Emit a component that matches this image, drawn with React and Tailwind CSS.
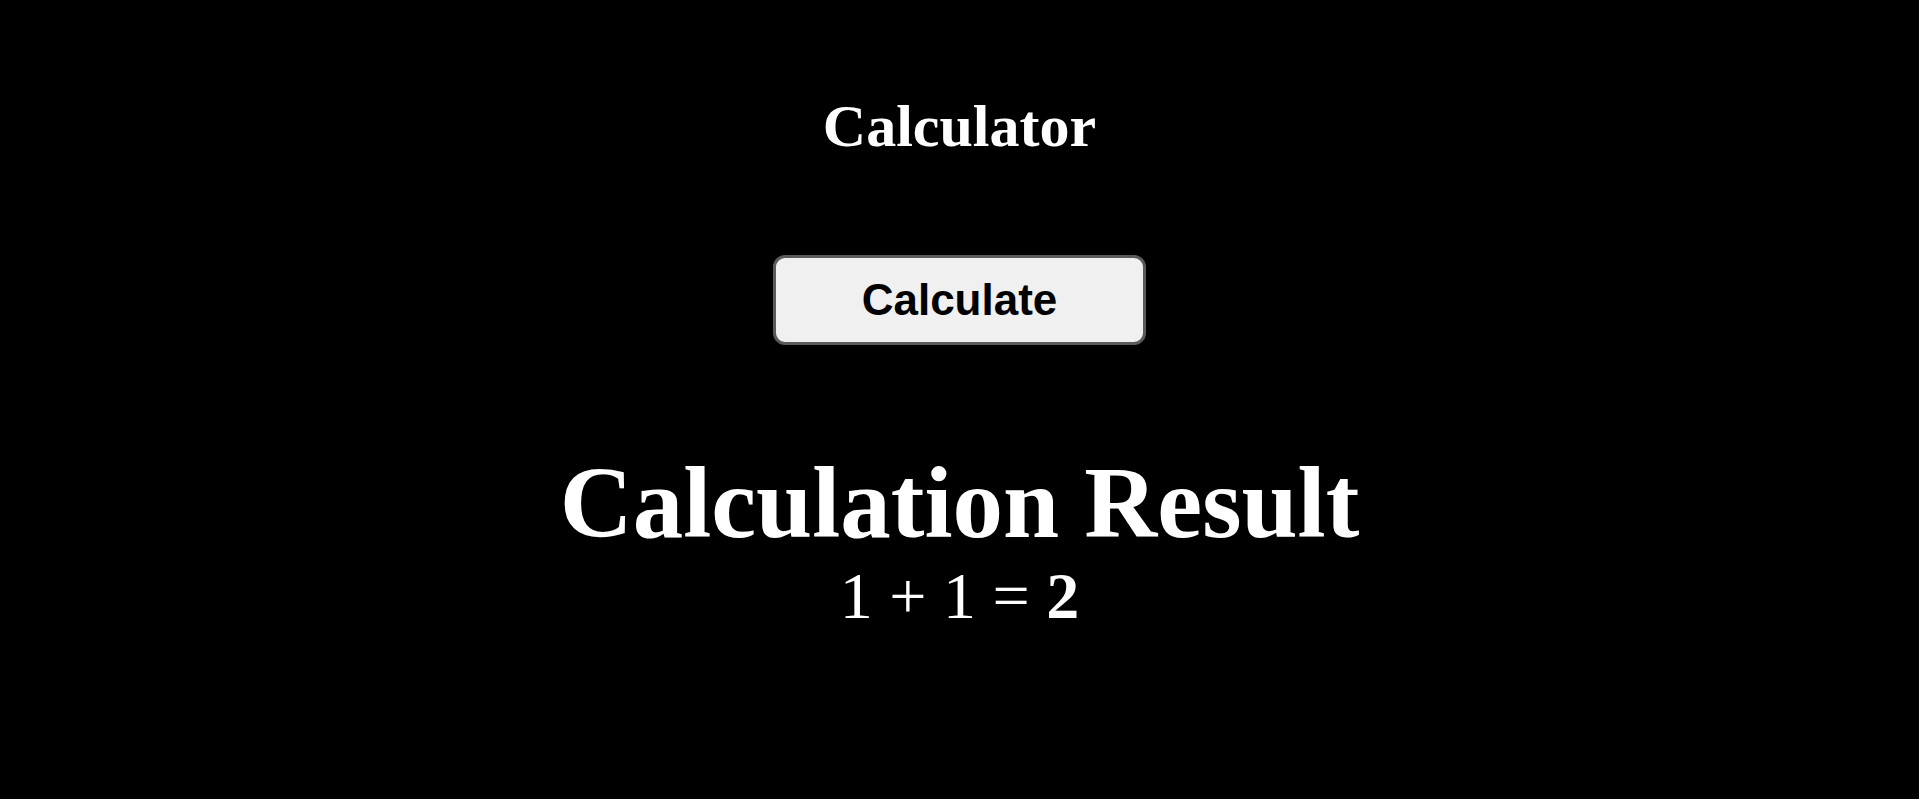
export default function App() {
  return (
    <div className="min-h-screen w-full bg-black text-white flex flex-col items-center font-['Liberation_Serif','Times_New_Roman',serif]">
      {/* Header */}
      <h1 className="mt-[92px] text-[60px] leading-[normal] font-bold">Calculator</h1>

      <button
        type="button"
        className="mt-[94px] w-[373px] h-[90px] rounded-[12px] border-[3px] border-[#5a5a5a] bg-[#f0f0f0] text-black text-[44px] font-bold font-['Liberation_Sans',Arial,sans-serif]"
      >
        Calculate
      </button>

      {/* Result */}
      <h2 className="mt-[100px] text-[101px] leading-[normal] font-bold">Calculation Result</h2>
      <p className="-mt-[3px] text-[66px] leading-[normal]">
        1 + 1 = <span className="font-bold">2</span>
      </p>
    </div>
  );
}
